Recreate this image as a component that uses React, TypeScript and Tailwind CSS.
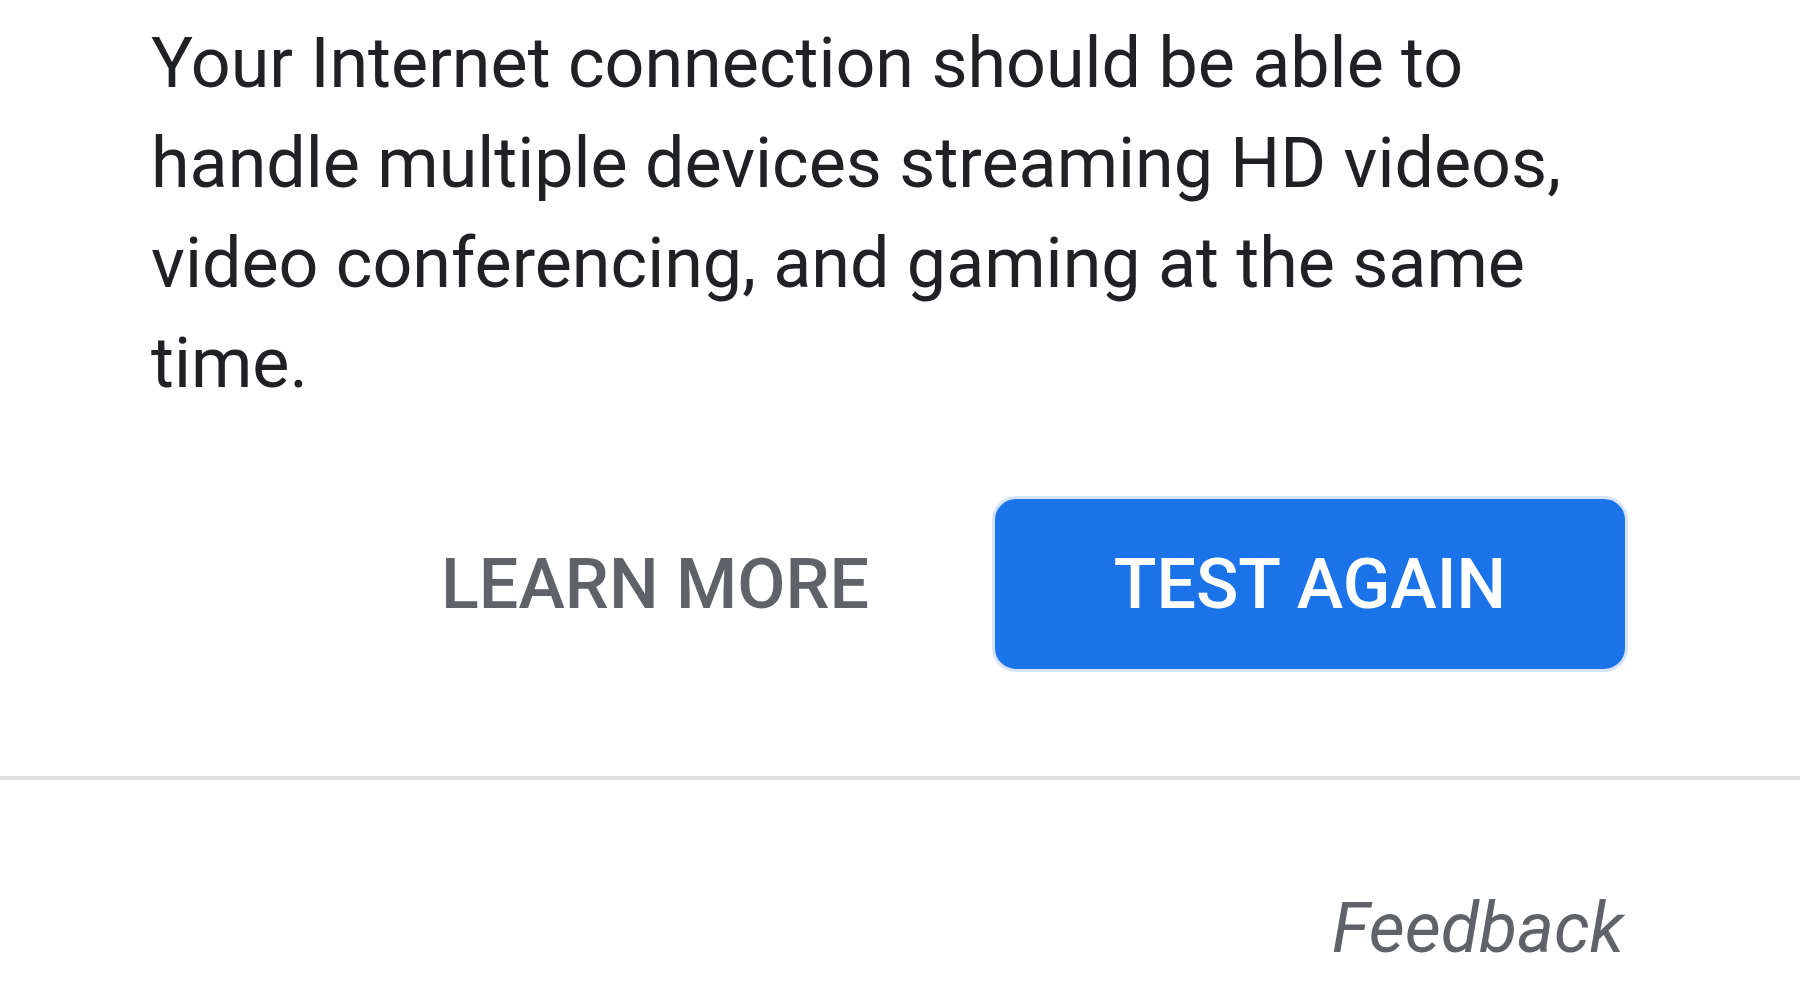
export default function App() {
  return (
    <div className="min-h-screen w-full bg-white font-['Roboto',sans-serif]">
      <section className="pl-[151px] pr-[172px] pt-[13px]">
        <p className="text-[70px] leading-[100px] text-[#202124]">
          Your Internet connection should be able to handle multiple devices
          streaming HD videos, video conferencing, and gaming at the same time.
        </p>
        <div className="mt-[83px] flex items-center justify-end gap-[123px]">
          <button className="text-[70px] font-medium leading-none text-[#5f6368]">
            LEARN MORE
          </button>
          <button className="flex h-[176px] w-[636px] items-center justify-center rounded-[24px] border-[3px] border-[#d6e4fb] bg-[#1a73e8] text-[70px] font-medium leading-none text-white">
            TEST AGAIN
          </button>
        </div>
      </section>
      <div className="mt-[104px] h-[4px] w-full bg-[#e0e0e0]" />
      <footer className="flex justify-end pr-[176px] pt-[113px]">
        <a className="text-[70px] italic leading-none text-[#5f6368]">Feedback</a>
      </footer>
    </div>
  );
}
